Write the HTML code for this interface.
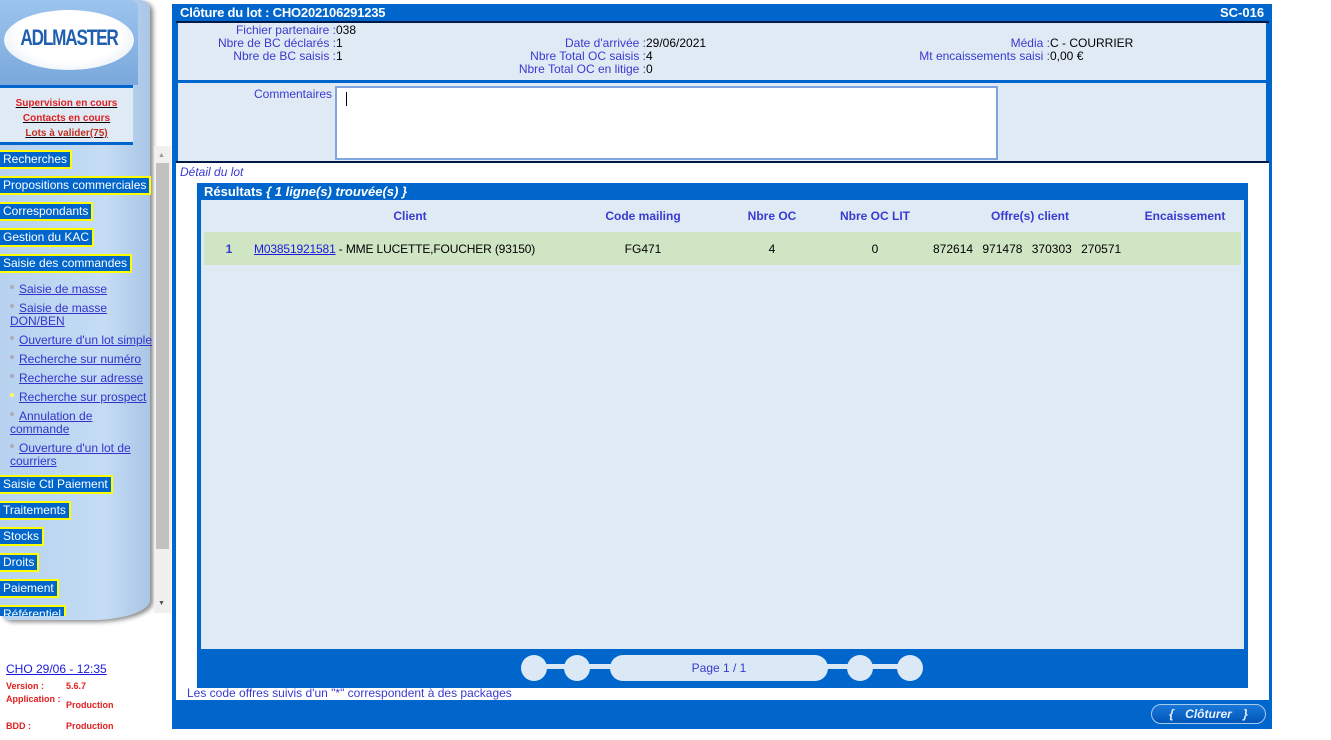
<!DOCTYPE html>
<html><head><meta charset="utf-8"><style>
*{margin:0;padding:0;box-sizing:border-box}
body{width:1331px;height:740px;background:#fff;position:relative;overflow:hidden;font-family:"Liberation Sans",Arial,sans-serif;font-size:12px}
.a{position:absolute}
.lbl{color:#3a3ad0}
.v{color:#000}
.menu{position:absolute;left:0;background:#0066cc;color:#fff;font-size:12px;padding:1px 3px;border:2px solid #ffff00;border-left:none;line-height:13px;white-space:nowrap}
.sub{position:absolute;left:10px;color:#3333cc;text-decoration:underline;font-size:12px;line-height:13px;width:140px}
.sub b{display:inline-block;width:4px;height:4px;background:#aab;border-radius:2px;margin-right:5px;vertical-align:4px}
.th{position:absolute;top:209px;color:#3a3ad0;font-weight:bold;font-size:12px;text-align:center}
.td{position:absolute;top:242px;font-size:12px;text-align:center}
.circ{position:absolute;top:655px;width:26px;height:26px;border-radius:50%;background:#dbe9f6}
.bar{position:absolute;top:664px;height:5px;background:#dbe9f6}
</style></head><body>
<!-- sidebar -->
<div class="a" style="left:0;top:0;width:150px;height:620px;background:linear-gradient(90deg,#b7d2ef,#c4dcf4 70%,#aac6e6);border-radius:0 10px 60px 10px / 0 10px 20px 10px;box-shadow:3px 2px 5px #888"></div>
<div class="a" style="left:0;top:0;width:138px;height:85px;background:linear-gradient(180deg,#9cc4ee,#7aa8dc);border-radius:0 8px 0 0"></div>
<div class="a" style="left:4px;top:10px;width:130px;height:60px;border-radius:50%;background:radial-gradient(ellipse at 50% 40%,#fff 55%,#d8e4f0);"></div>
<div class="a" style="left:4px;top:25px;width:130px;text-align:center;font-size:22px;font-weight:bold;color:#1f5fae;letter-spacing:-1.5px;transform:scaleX(.78)">ADLMASTER</div>
<div class="a" style="left:0;top:85px;width:133px;height:60px;background:#e0eaf5;border-top:3px solid #0066cc;border-bottom:3px solid #0066cc"></div>
<div class="a" style="left:0;top:96px;width:133px;text-align:center;font-size:10px;font-weight:bold;line-height:15px;text-decoration:underline">
<div style="color:#e02020">Supervision en cours</div><div style="color:#e02020">Contacts en cours</div><div style="color:#c03020">Lots à valider(75)</div></div>
<div class="menu" style="top:150px">Recherches</div>
<div class="menu" style="top:176px">Propositions commerciales</div>
<div class="menu" style="top:202px">Correspondants</div>
<div class="menu" style="top:228px">Gestion du KAC</div>
<div class="menu" style="top:254px">Saisie des commandes</div>
<div class="sub" style="top:283px"><b></b>Saisie de masse</div>
<div class="sub" style="top:302px"><b></b>Saisie de masse DON/BEN</div>
<div class="sub" style="top:334px;width:150px"><b></b>Ouverture d'un lot simple</div>
<div class="sub" style="top:353px"><b></b>Recherche sur numéro</div>
<div class="sub" style="top:372px"><b></b>Recherche sur adresse</div>
<div class="sub" style="top:391px"><b style="background:#ffff60"></b>Recherche sur prospect</div>
<div class="sub" style="top:410px;width:100px"><b></b>Annulation de commande</div>
<div class="sub" style="top:442px;width:130px"><b></b>Ouverture d'un lot de courriers</div>
<div class="menu" style="top:475px">Saisie Ctl Paiement</div>
<div class="menu" style="top:501px">Traitements</div>
<div class="menu" style="top:527px">Stocks</div>
<div class="menu" style="top:553px">Droits</div>
<div class="menu" style="top:579px">Paiement</div>
<div class="menu" style="top:605px;height:11px;overflow:hidden;border-bottom:none">Référentiel</div>
<!-- scrollbar -->
<div class="a" style="left:154px;top:146px;width:17px;height:467px;background:#f0f0f0"></div>
<div class="a" style="left:156px;top:163px;width:13px;height:386px;background:#c1c1c1"></div>
<div class="a" style="left:158px;top:152px;font-size:7px;color:#999">▲</div>
<div class="a" style="left:158px;top:600px;font-size:7px;color:#555">▼</div>
<div class="a" style="left:6px;top:662px;color:#1a1ae0;font-size:12px;text-decoration:underline">CHO 29/06 - 12:35</div>
<div class="a" style="left:6px;top:680px;color:#e02020;font-size:9px;font-weight:bold;line-height:12px">Version :<span style="position:absolute;left:60px">5.6.7</span></div>
<div class="a" style="left:6px;top:694px;color:#e02020;font-size:9px;font-weight:bold;line-height:10px;width:55px">Application :<span style="position:absolute;left:60px;top:6px">Production</span></div>
<div class="a" style="left:6px;top:721px;color:#e02020;font-size:9px;font-weight:bold">BDD :<span style="position:absolute;left:60px">Production</span></div>
<!-- main -->
<div class="a" style="left:172px;top:4px;width:1100px;height:725px;background:#0066cc"></div>
<div class="a" style="left:180px;top:5px;color:#fff;font-weight:bold;font-size:13px;line-height:16px;letter-spacing:-0.2px">Clôture du lot : CHO202106291235</div>
<div class="a" style="left:1220px;top:5px;color:#fff;font-weight:bold;font-size:13px;line-height:16px">SC-016</div>
<div class="a" style="left:176px;top:21px;width:1093px;height:2px;background:#001a4a"></div>
<div class="a" style="left:176px;top:161px;width:1093px;height:2px;background:#001a4a"></div>
<div class="a" style="left:178px;top:23px;width:1088px;height:57px;background:#e0eaf5"></div>
<div class="a" style="left:178px;top:83px;width:1088px;height:78px;background:#e0eaf5"></div>
<div class="a" style="left:176px;top:80px;width:1093px;height:3px;background:#0066cc"></div>
<div class="a lbl" style="top:24px;left:140px;width:196px;text-align:right;line-height:13px">Fichier partenaire :<br>Nbre de BC déclarés :<br>Nbre de BC saisis :</div>
<div class="a v" style="top:24px;left:336px;line-height:13px">038<br>1<br>1</div>
<div class="a lbl" style="top:37px;left:400px;width:246px;text-align:right;line-height:13px">Date d'arrivée :<br>Nbre Total OC saisis :<br>Nbre Total OC en litige :</div>
<div class="a v" style="top:37px;left:646px;line-height:13px">29/06/2021<br>4<br>0</div>
<div class="a lbl" style="top:37px;left:850px;width:200px;text-align:right;line-height:13px">Média :<br>Mt encaissements saisi :</div>
<div class="a v" style="top:37px;left:1050px;line-height:13px">C - COURRIER<br>0,00 €</div>
<div class="a lbl" style="top:87px;left:254px">Commentaires :</div>
<div class="a" style="left:335px;top:86px;width:663px;height:74px;background:#fff;border:2px solid #7fa6e0"></div>
<div class="a" style="left:346px;top:92px;width:1px;height:14px;background:#000"></div>
<!-- white area -->
<div class="a" style="left:176px;top:163px;width:1093px;height:537px;background:#fff"></div>
<div class="a lbl" style="left:180px;top:165px;font-style:italic">Détail du lot</div>
<div class="a" style="left:197px;top:183px;width:1051px;height:505px;background:#0066cc"></div>
<div class="a" style="left:204px;top:183px;color:#fff;font-weight:bold;font-size:13px;line-height:17px">Résultats <i>{ 1 ligne(s) trouvée(s) }</i></div>
<div class="a" style="left:201px;top:200px;width:1043px;height:449px;background:#e0eaf5"></div>
<div class="a" style="left:204px;top:232px;width:1037px;height:33px;background:#cfe5c4"></div>
<div class="th" style="left:330px;width:160px">Client</div>
<div class="th" style="left:583px;width:120px">Code mailing</div>
<div class="th" style="left:722px;width:100px">Nbre OC</div>
<div class="th" style="left:825px;width:100px">Nbre OC LIT</div>
<div class="th" style="left:960px;width:140px">Offre(s) client</div>
<div class="th" style="left:1135px;width:100px">Encaissement</div>
<div class="td" style="left:219px;width:20px;color:#3a3ad0;font-weight:bold">1</div>
<div class="td" style="left:254px;text-align:left;letter-spacing:-0.15px"><span style="color:#1a1ae0;text-decoration:underline">M03851921581</span> - MME LUCETTE,FOUCHER (93150)</div>
<div class="td" style="left:583px;width:120px">FG471</div>
<div class="td" style="left:722px;width:100px">4</div>
<div class="td" style="left:825px;width:100px">0</div>
<div class="td" style="left:933px;text-align:left;word-spacing:6px">872614 971478 370303 270571</div>
<!-- pagination -->
<div class="bar" style="left:540px;width:370px"></div>
<div class="circ" style="left:521px"></div>
<div class="circ" style="left:564px"></div>
<div class="a" style="left:610px;top:655px;width:218px;height:26px;border-radius:13px;background:#dbe9f6;text-align:center;line-height:26px;color:#3a3ad0;font-size:12px">Page 1 / 1</div>
<div class="circ" style="left:847px"></div>
<div class="circ" style="left:897px"></div>
<div class="a lbl" style="left:187px;top:686px">Les code offres suivis d'un "*" correspondent à des packages</div>
<div class="a" style="left:1151px;top:704px;width:115px;height:20px;border-radius:10px;border:1px solid #a8c8ee;background:linear-gradient(#1a78d8,#0055b8);color:#e8f2ff;font-style:italic;font-weight:bold;font-size:12px;line-height:18px;text-align:center;word-spacing:8px">{ Clôturer }</div>
</body></html>
